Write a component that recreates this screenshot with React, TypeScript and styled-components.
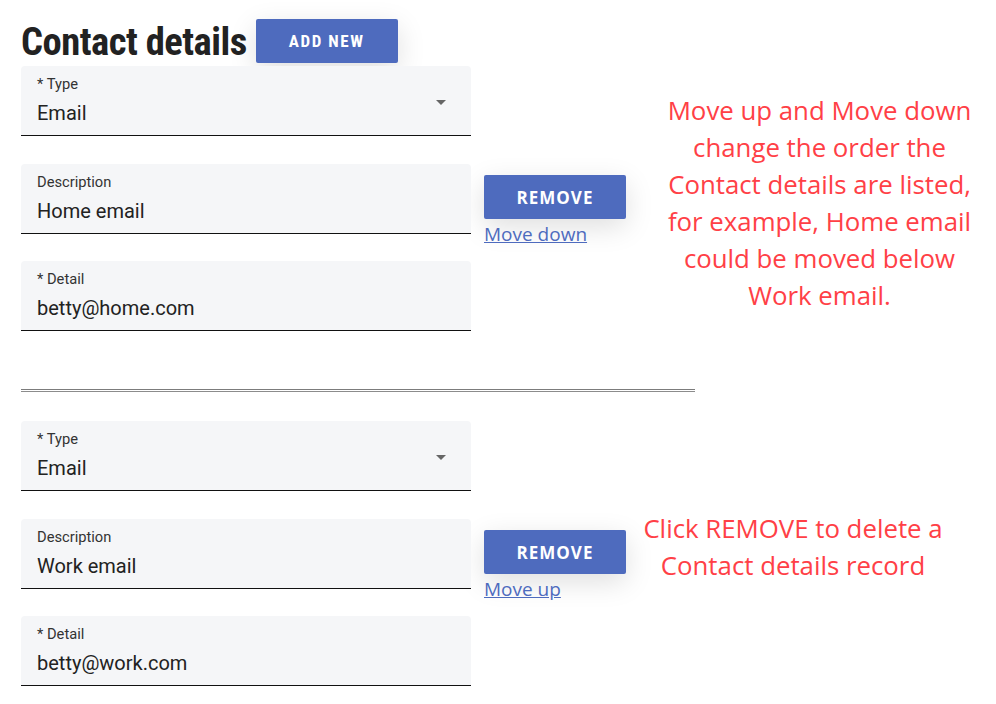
import * as React from "react";
import styled, { createGlobalStyle } from "styled-components";

const GlobalStyle = createGlobalStyle`
  body {
    margin: 0;
    background: #ffffff;
    font-family: "Roboto", "Liberation Sans", sans-serif;
  }
`;

const Page = styled.div`
  padding: 16px 0 0 21px;
  width: 975px;
  box-sizing: border-box;
`;

const Header = styled.div`
  display: flex;
  align-items: center;
  gap: 9px;
  height: 50px;
`;

const Title = styled.h1`
  margin: 0;
  font-family: "Roboto Condensed", "Liberation Sans Narrow", "Roboto", sans-serif;
  font-stretch: condensed;
  font-weight: 700;
  font-size: 38.6px;
  color: #222;
  letter-spacing: -0.5px;
`;

const ActionButton = styled.button<{ condensed?: boolean }>`
  width: 142px;
  height: 44px;
  padding: 0;
  border: none;
  border-radius: 2px;
  background: #4e6bbe;
  color: #ffffff;
  font-family: ${({ condensed }) =>
    condensed
      ? `"Roboto Condensed", "Liberation Sans Narrow", "Roboto", sans-serif`
      : `"Open Sans", "Noto Sans", sans-serif`};
  font-stretch: ${({ condensed }) => (condensed ? "condensed" : "normal")};
  font-weight: 700;
  font-size: 17px;
  letter-spacing: ${({ condensed }) => (condensed ? "1.6px" : "1px")};
  box-shadow: 0 8px 28px rgba(0, 0, 0, 0.13);
  cursor: pointer;
`;

const Group = styled.div`
  display: flex;
  align-items: flex-start;
`;

const Fields = styled.div`
  display: flex;
  flex-direction: column;
  gap: 27.5px;
  width: 450px;
  flex-shrink: 0;
`;

const Field = styled.div`
  position: relative;
  height: 70px;
  box-sizing: border-box;
  padding: 10px 16px 0;
  background: #f5f6f8;
  border-radius: 4px 4px 0 0;
  border-bottom: 1px solid #111;
`;

const FieldLabel = styled.div`
  font-size: 14.7px;
  line-height: 16px;
  color: #333;
`;

const FieldValue = styled.div`
  margin-top: 9px;
  font-size: 20px;
  line-height: 24px;
  color: #222;
`;

const Caret = styled.span`
  position: absolute;
  right: 25px;
  top: 34px;
  width: 0;
  height: 0;
  border-left: 5.5px solid transparent;
  border-right: 5.5px solid transparent;
  border-top: 5.5px solid #666;
`;

const Actions = styled.div`
  display: flex;
  flex-direction: column;
  align-items: flex-start;
  margin: 109px 0 0 13px;
  gap: 4px;
  flex-shrink: 0;
`;

const MoveLink = styled.a`
  font-family: "Open Sans", "Noto Sans", sans-serif;
  font-size: 19px;
  line-height: 22px;
  color: #4e6bbe;
  text-decoration: underline;
  cursor: pointer;
`;

const Note = styled.p<{ offset: number; top: number; bottom: number }>`
  align-self: center;
  margin: ${({ top }) => top}px 0 ${({ bottom }) => bottom}px
    ${({ offset }) => offset}px;
  width: 320px;
  text-align: center;
  font-family: "Open Sans", "Noto Sans", sans-serif;
  font-size: 25.8px;
  line-height: 37px;
  color: #ff4046;
  white-space: nowrap;
`;

const Divider = styled.hr`
  width: 674px;
  height: 1px;
  margin: 58px 0 29px;
  border: 1px solid #7c7c7c;
  border-bottom-color: #8c8c8c;
  border-left: none;
  border-right: none;
  box-sizing: content-box;
`;

type Contact = {
  description: string;
  detail: string;
  link: string;
  note: string[];
  noteOffset: number;
  noteTop: number;
  noteBottom: number;
};

const contacts: Contact[] = [
  {
    description: "Home email",
    detail: "betty@home.com",
    link: "Move down",
    note: [
      "Move up and Move down",
      "change the order the",
      "Contact details are listed,",
      "for example, Home email",
      "could be moved below",
      "Work email."
    ],
    noteOffset: 38,
    noteTop: 8,
    noteBottom: 0
  },
  {
    description: "Work email",
    detail: "betty@work.com",
    link: "Move up",
    note: ["Click REMOVE to delete a", "Contact details record"],
    noteOffset: 7,
    noteTop: 0,
    noteBottom: 14
  }
];

const ContactGroup = ({ contact }: { contact: Contact }) => (
  <Group>
    <Fields>
      <Field>
        <FieldLabel>* Type</FieldLabel>
        <FieldValue>Email</FieldValue>
        <Caret />
      </Field>
      <Field>
        <FieldLabel>Description</FieldLabel>
        <FieldValue>{contact.description}</FieldValue>
      </Field>
      <Field>
        <FieldLabel>* Detail</FieldLabel>
        <FieldValue>{contact.detail}</FieldValue>
      </Field>
    </Fields>
    <Actions>
      <ActionButton>REMOVE</ActionButton>
      <MoveLink>{contact.link}</MoveLink>
    </Actions>
    <Note
      offset={contact.noteOffset}
      top={contact.noteTop}
      bottom={contact.noteBottom}
    >
      {contact.note.map((line, i) => (
        <React.Fragment key={i}>
          {line}
          {i < contact.note.length - 1 && <br />}
        </React.Fragment>
      ))}
    </Note>
  </Group>
);

export default function App() {
  return (
    <Page>
      <GlobalStyle />
      <Header>
        <Title>Contact details</Title>
        <ActionButton condensed>ADD NEW</ActionButton>
      </Header>
      <ContactGroup contact={contacts[0]} />
      <Divider />
      <ContactGroup contact={contacts[1]} />
    </Page>
  );
}
